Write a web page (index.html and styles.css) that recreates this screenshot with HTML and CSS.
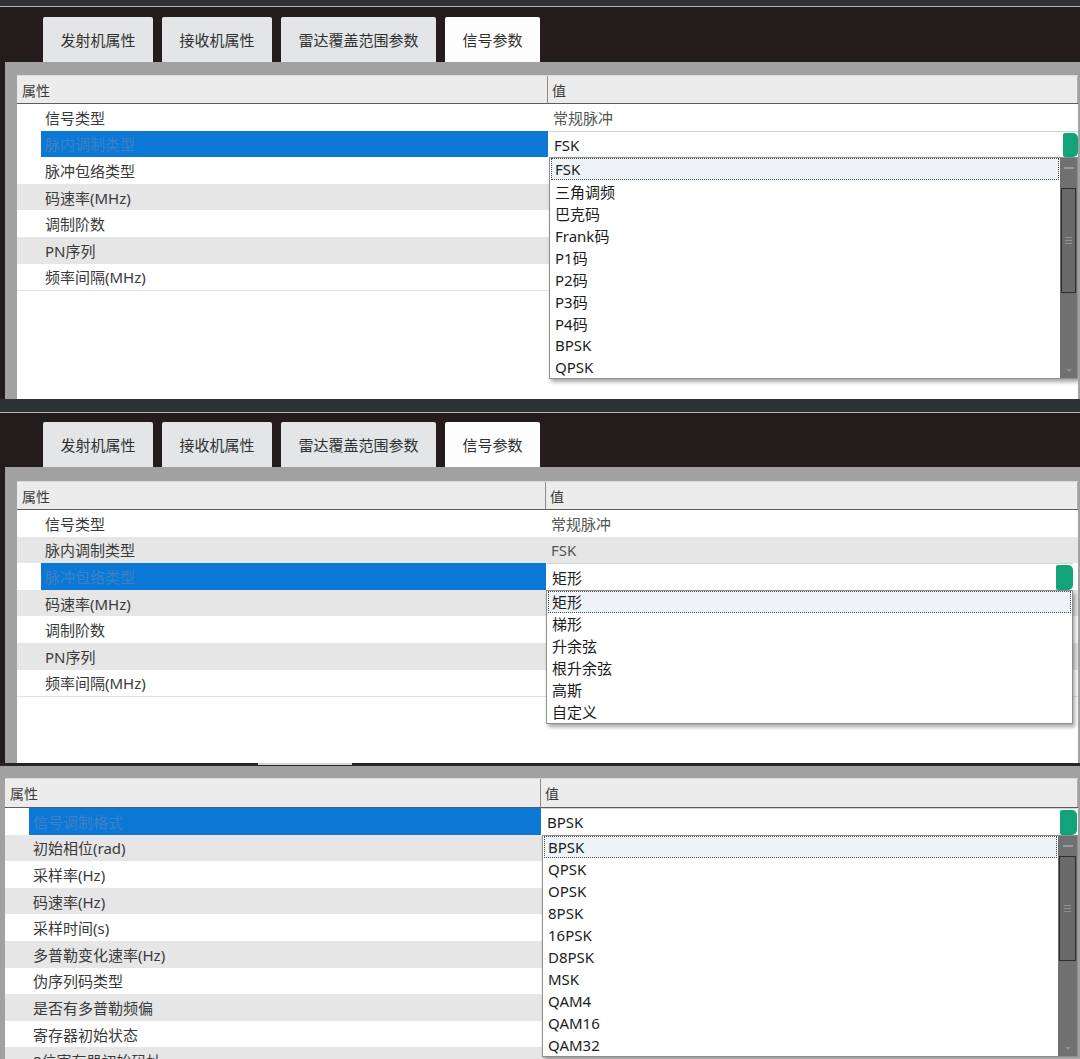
FILE: index.html
```html
<!DOCTYPE html>
<html lang="zh-CN">
<head>
<meta charset="utf-8">
<title>信号参数</title>
<link rel="stylesheet" href="styles.css">
</head>
<body>
<div class="screen">

  <!-- Window 1 -->
  <section class="win win-1">
    <div class="titlebar"></div>
    <div class="tabbar">
      <div class="tab">发射机属性</div>
      <div class="tab">接收机属性</div>
      <div class="tab">雷达覆盖范围参数</div>
      <div class="tab active">信号参数</div>
    </div>
    <div class="frame">
      <div class="content">
        <div class="grid">
          <div class="head"><div class="hprop">属性</div><div class="hval">值</div></div>
          <div class="row"><div class="prop"><span class="label">信号类型</span></div><div class="val">常规脉冲</div></div>
          <div class="row sel alt"><div class="prop"><span class="label">脉内调制类型</span></div>
            <div class="val edit">
              <div class="editor"><span class="etext">FSK</span><span class="ebtn"></span></div>
              <div class="drop">
                <div class="list">
                  <div class="item cur">FSK</div>
                  <div class="item">三角调频</div>
                  <div class="item">巴克码</div>
                  <div class="item">Frank码</div>
                  <div class="item">P1码</div>
                  <div class="item">P2码</div>
                  <div class="item">P3码</div>
                  <div class="item">P4码</div>
                  <div class="item">BPSK</div>
                  <div class="item">QPSK</div>
                </div>
                <div class="sbar">
                  <span class="sup"></span>
                  <span class="thumb"><i></i><i></i><i></i></span>
                  <span class="sdown"></span>
                </div>
              </div>
            </div>
          </div>
          <div class="row"><div class="prop"><span class="label">脉冲包络类型</span></div><div class="val"></div></div>
          <div class="row alt"><div class="prop"><span class="label">码速率(MHz)</span></div><div class="val"></div></div>
          <div class="row"><div class="prop"><span class="label">调制阶数</span></div><div class="val"></div></div>
          <div class="row alt"><div class="prop"><span class="label">PN序列</span></div><div class="val"></div></div>
          <div class="row last"><div class="prop"><span class="label">频率间隔(MHz)</span></div><div class="val"></div></div>
        </div>
      </div>
    </div>
  </section>

  <!-- Window 2 -->
  <section class="win win-2">
    <div class="titlebar"></div>
    <div class="tabbar">
      <div class="tab">发射机属性</div>
      <div class="tab">接收机属性</div>
      <div class="tab">雷达覆盖范围参数</div>
      <div class="tab active">信号参数</div>
    </div>
    <div class="frame">
      <div class="content">
        <div class="grid">
          <div class="head"><div class="hprop">属性</div><div class="hval">值</div></div>
          <div class="row"><div class="prop"><span class="label">信号类型</span></div><div class="val">常规脉冲</div></div>
          <div class="row alt"><div class="prop"><span class="label">脉内调制类型</span></div><div class="val">FSK</div></div>
          <div class="row sel"><div class="prop"><span class="label">脉冲包络类型</span></div>
            <div class="val edit">
              <div class="editor"><span class="etext">矩形</span><span class="ebtn"></span></div>
              <div class="drop">
                <div class="list">
                  <div class="item cur">矩形</div>
                  <div class="item">梯形</div>
                  <div class="item">升余弦</div>
                  <div class="item">根升余弦</div>
                  <div class="item">高斯</div>
                  <div class="item">自定义</div>
                </div>
              </div>
            </div>
          </div>
          <div class="row alt"><div class="prop"><span class="label">码速率(MHz)</span></div><div class="val"></div></div>
          <div class="row"><div class="prop"><span class="label">调制阶数</span></div><div class="val"></div></div>
          <div class="row alt"><div class="prop"><span class="label">PN序列</span></div><div class="val"></div></div>
          <div class="row last"><div class="prop"><span class="label">频率间隔(MHz)</span></div><div class="val"></div></div>
        </div>
      </div>
    </div>
    <div class="seam"><span class="seam-tab"></span></div>
  </section>

  <!-- Window 3 -->
  <section class="win win-3">
    <div class="frame">
      <div class="content">
        <div class="grid">
          <div class="head"><div class="hprop">属性</div><div class="hval">值</div></div>
          <div class="row sel"><div class="prop"><span class="label">信号调制格式</span></div>
            <div class="val edit">
              <div class="editor"><span class="etext">BPSK</span><span class="ebtn"></span></div>
              <div class="drop">
                <div class="list">
                  <div class="item cur">BPSK</div>
                  <div class="item">QPSK</div>
                  <div class="item">OPSK</div>
                  <div class="item">8PSK</div>
                  <div class="item">16PSK</div>
                  <div class="item">D8PSK</div>
                  <div class="item">MSK</div>
                  <div class="item">QAM4</div>
                  <div class="item">QAM16</div>
                  <div class="item">QAM32</div>
                </div>
                <div class="sbar">
                  <span class="sup"></span>
                  <span class="thumb"><i></i><i></i><i></i></span>
                  <span class="sdown"></span>
                </div>
              </div>
            </div>
          </div>
          <div class="row alt"><div class="prop"><span class="label">初始相位(rad)</span></div><div class="val"></div></div>
          <div class="row"><div class="prop"><span class="label">采样率(Hz)</span></div><div class="val"></div></div>
          <div class="row alt"><div class="prop"><span class="label">码速率(Hz)</span></div><div class="val"></div></div>
          <div class="row"><div class="prop"><span class="label">采样时间(s)</span></div><div class="val"></div></div>
          <div class="row alt"><div class="prop"><span class="label">多普勒变化速率(Hz)</span></div><div class="val"></div></div>
          <div class="row"><div class="prop"><span class="label">伪序列码类型</span></div><div class="val"></div></div>
          <div class="row alt"><div class="prop"><span class="label">是否有多普勒频偏</span></div><div class="val"></div></div>
          <div class="row"><div class="prop"><span class="label">寄存器初始状态</span></div><div class="val"></div></div>
          <div class="row alt"><div class="prop"><span class="label">8位寄存器初始码址</span></div><div class="val"></div></div>
        </div>
      </div>
    </div>
  </section>

</div>
</body>
</html>
```

FILE: styles.css
```css
* { box-sizing: border-box; }

html, body {
  margin: 0;
  padding: 0;
}

body {
  width: 1080px;
  height: 1059px;
  overflow: hidden;
  background: #231b1c;
  font-family: "Noto Sans", "Noto Sans CJK SC", sans-serif;
  font-size: 15px;
  color: #383838;
}

.screen {
  display: flex;
  flex-direction: column;
  width: 1080px;
}

.win {
  background: #231b1c;
  display: flex;
  flex-direction: column;
}

/* window strip on top */
.titlebar {
  background: #2d3235;
  border-bottom: 1px solid #b4b7b9;
}
.win-1 .titlebar { height: 7px; }
.win-2 .titlebar { height: 14px; }

/* tabs */
.tabbar {
  display: flex;
  align-items: flex-end;
  gap: 9px;
  padding-left: 43px;
}
.win-1 .tabbar { height: 55px; }
.win-2 .tabbar { height: 54px; }

.tab {
  height: 45px;
  padding: 0 17.5px 1px;
  display: flex;
  align-items: center;
  justify-content: center;
  background: #e4e5e7;
  color: #303030;
  font-size: 15px;
  border-radius: 2px 2px 0 0;
  white-space: nowrap;
}
.tab.active {
  background: #fdfdfd;
}

/* gray frame around the property grid */
.frame {
  background: #a1a1a1;
  margin-left: 5px;
  padding: 13px 2px 0 12px;
  display: flex;
}
.win-1 .frame { height: 337px; }
.win-2 .frame { height: 296px; padding-top: 14px; }
.win-3 .frame {
  height: 293px;
  margin-left: 0;
  padding: 12px 2px 0 5px;
}

.content {
  flex: 1;
  background: #ffffff;
  overflow: hidden;
}

.seam {
  height: 3px;
  background: #262626;
  display: flex;
}
.seam-tab {
  margin-left: 258px;
  width: 94px;
  height: 2px;
  background: #d6d6d6;
}

/* property grid */
.grid {
  --pw: 531px;
  display: flex;
  flex-direction: column;
}
.win-2 .grid { --pw: 529px; }
.win-3 .grid { --pw: 536px; }

.head {
  display: flex;
  height: 29px;
  background: #ececec;
  border-top: 1px solid #d9d9d9;
  border-bottom: 1px solid #5d5d5d;
  font-size: 14px;
  color: #3a3a3a;
}
.win-3 .head { height: 30px; }

.hprop {
  width: var(--pw);
  flex: none;
  padding-left: 5px;
  display: flex;
  align-items: center;
  border-right: 1px solid #8c8c8c;
}
.hval {
  flex: 1;
  padding-left: 4px;
  display: flex;
  align-items: center;
  border-right: 1px solid #b0b0b0;
}

.row {
  display: flex;
  height: 26.6px;
  background: #ffffff;
}
.row.alt { background: #e6e6e6; }
.row.last { border-bottom: 1px solid #e2e2e2; height: 27.6px; }

.prop {
  width: var(--pw);
  flex: none;
  padding-left: 24px;
  display: flex;
}
.label {
  flex: 1;
  display: flex;
  align-items: center;
  padding-left: 4px;
  white-space: nowrap;
  color: #3a3a3a;
}
.row.sel .label {
  background: #0b78d6;
  color: #3f80c6;
}
.row.sel { background: #ffffff; }

.val {
  flex: 1;
  display: flex;
  align-items: center;
  padding-left: 5px;
  color: #555555;
  white-space: nowrap;
}

/* in-place editor */
.val.edit {
  position: relative;
  padding-left: 1px;
  align-items: stretch;
}
.editor {
  flex: 1;
  display: flex;
  align-items: center;
  background: #ffffff;
  border-top: 1px solid #cfd3d5;
}
.win-2 .editor { margin-right: 5px; }
.win-3 .editor { margin-right: 1px; }

.etext {
  flex: 1;
  padding-left: 5px;
  padding-top: 1px;
  color: #1c1c1c;
}
.ebtn {
  width: 15px;
  align-self: stretch;
  margin: 1px 0 0;
  background: #13a37b;
  border-radius: 2px 5px 5px 2px;
}
.win-2 .ebtn { width: 17px; }
.win-3 .ebtn { width: 17px; }

/* drop-down list (overlay) */
.drop {
  position: absolute;
  top: 100%;
  left: 1px;
  right: 0;
  z-index: 5;
  display: flex;
  background: #ffffff;
  border: 1px solid #8e8e8e;
  box-shadow: 2px 3px 4px rgba(0, 0, 0, 0.35);
}
.win-2 .drop { left: 0; right: 5px; }
.win-3 .drop { left: 1px; right: 0; }

.list {
  flex: 1;
  display: flex;
  flex-direction: column;
}
.item {
  height: 22px;
  padding-left: 4px;
  display: flex;
  align-items: center;
  color: #1c1c1c;
  white-space: nowrap;
  border: 1px solid transparent;
}
.item.cur {
  background: #edf3f6;
  border: 1px dotted #4a4a4a;
  margin: 0 1px;
  padding-left: 3px;
}

/* scrollbar */
.sbar {
  width: 17px;
  flex: none;
  background: #707070;
  display: flex;
  flex-direction: column;
  align-items: center;
  position: relative;
}
.win-3 .sbar { width: 19px; }

.sup {
  width: 10px;
  height: 2px;
  margin-top: 9px;
  background: #9b9b9b;
}
.thumb {
  width: 15px;
  height: 105px;
  margin-top: 19px;
  background: #6a6a6a;
  border: 1px solid #2c2c2c;
  display: flex;
  flex-direction: column;
  align-items: center;
  justify-content: center;
  gap: 2px;
}
.win-3 .thumb { margin-top: 9px; width: 17px; }
.thumb i {
  display: block;
  width: 7px;
  height: 1px;
  background: #8f8f8f;
}
.sdown {
  margin-top: auto;
  margin-bottom: 6px;
  width: 0;
  height: 0;
  border-left: 3px solid transparent;
  border-right: 3px solid transparent;
  border-top: 3px solid #8e8e8e;
}
```
